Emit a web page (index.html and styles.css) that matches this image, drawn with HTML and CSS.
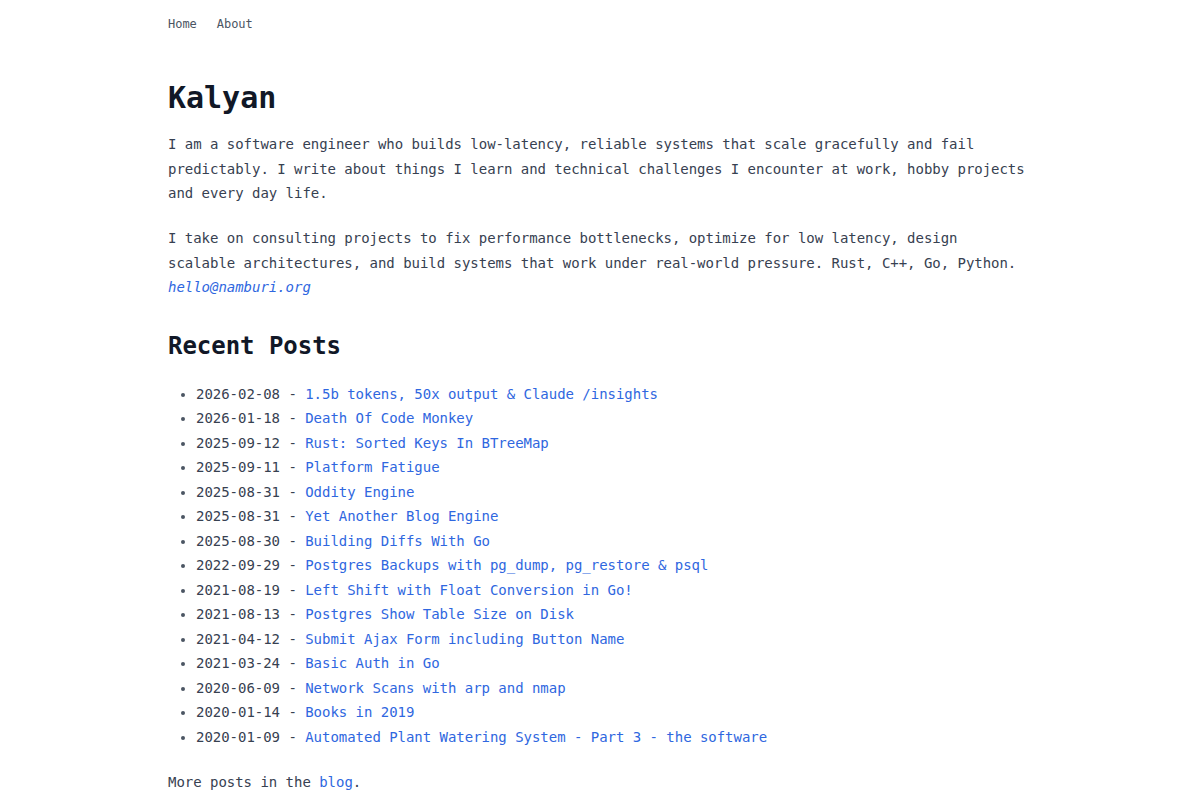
FILE: index.html
```html
<!DOCTYPE html>
<html lang="en">
<head>
<meta charset="utf-8">
<title>Kalyan</title>
<link rel="stylesheet" href="styles.css">
</head>
<body>
<div class="page">
  <nav class="nav">
    <a href="#">Home</a>
    <a href="#">About</a>
  </nav>
  <main>
    <h1 class="title">Kalyan</h1>
    <p class="para">I am a software engineer who builds low-latency, reliable systems that scale gracefully and fail predictably. I write about things I learn and technical challenges I encounter at work, hobby projects and every day life.</p>
    <p class="para">I take on consulting projects to fix performance bottlenecks, optimize for low latency, design scalable architectures, and build systems that work under real-world pressure. Rust, C++, Go, Python.<br><a class="link email" href="#">hello@namburi.org</a></p>
    <h2 class="section">Recent Posts</h2>
    <ul class="posts">
      <li>2026-02-08 - <a class="link" href="#">1.5b tokens, 50x output &amp; Claude /insights</a></li>
      <li>2026-01-18 - <a class="link" href="#">Death Of Code Monkey</a></li>
      <li>2025-09-12 - <a class="link" href="#">Rust: Sorted Keys In BTreeMap</a></li>
      <li>2025-09-11 - <a class="link" href="#">Platform Fatigue</a></li>
      <li>2025-08-31 - <a class="link" href="#">Oddity Engine</a></li>
      <li>2025-08-31 - <a class="link" href="#">Yet Another Blog Engine</a></li>
      <li>2025-08-30 - <a class="link" href="#">Building Diffs With Go</a></li>
      <li>2022-09-29 - <a class="link" href="#">Postgres Backups with pg_dump, pg_restore &amp; psql</a></li>
      <li>2021-08-19 - <a class="link" href="#">Left Shift with Float Conversion in Go!</a></li>
      <li>2021-08-13 - <a class="link" href="#">Postgres Show Table Size on Disk</a></li>
      <li>2021-04-12 - <a class="link" href="#">Submit Ajax Form including Button Name</a></li>
      <li>2021-03-24 - <a class="link" href="#">Basic Auth in Go</a></li>
      <li>2020-06-09 - <a class="link" href="#">Network Scans with arp and nmap</a></li>
      <li>2020-01-14 - <a class="link" href="#">Books in 2019</a></li>
      <li>2020-01-09 - <a class="link" href="#">Automated Plant Watering System - Part 3 - the software</a></li>
    </ul>
    <p class="para">More posts in the <a class="link" href="#">blog</a>.</p>
  </main>
</div>
</body>
</html>
```

FILE: styles.css
```css
html, body {
  margin: 0;
  padding: 0;
  background: #ffffff;
}

body {
  font-family: "DejaVu Sans Mono", "Liberation Mono", monospace;
  color: #374151;
  font-size: 14px;
  line-height: 1.75;
  letter-spacing: -0.03px;
}

.page {
  max-width: 864px;
  margin: 0 auto;
  padding-top: 15px;
}

.nav {
  display: flex;
  gap: 20px;
  font-size: 12px;
  line-height: 18px;
}

.nav a {
  color: #4b5563;
  text-decoration: none;
}

.title {
  margin: 47px 0 16px;
  font-size: 30px;
  line-height: 36px;
  font-weight: 700;
  color: #111827;
}

.para {
  margin: 0 0 20.5px;
}

.section {
  margin: 30px 0 20px;
  font-size: 24px;
  line-height: 32px;
  font-weight: 700;
  color: #111827;
}

.posts {
  margin: 0 0 20.5px;
  padding-left: 28px;
}

.posts li::marker {
  color: #4b5563;
}

.link {
  color: #2f67e0;
  text-decoration: none;
}

.email {
  font-style: italic;
}
```
